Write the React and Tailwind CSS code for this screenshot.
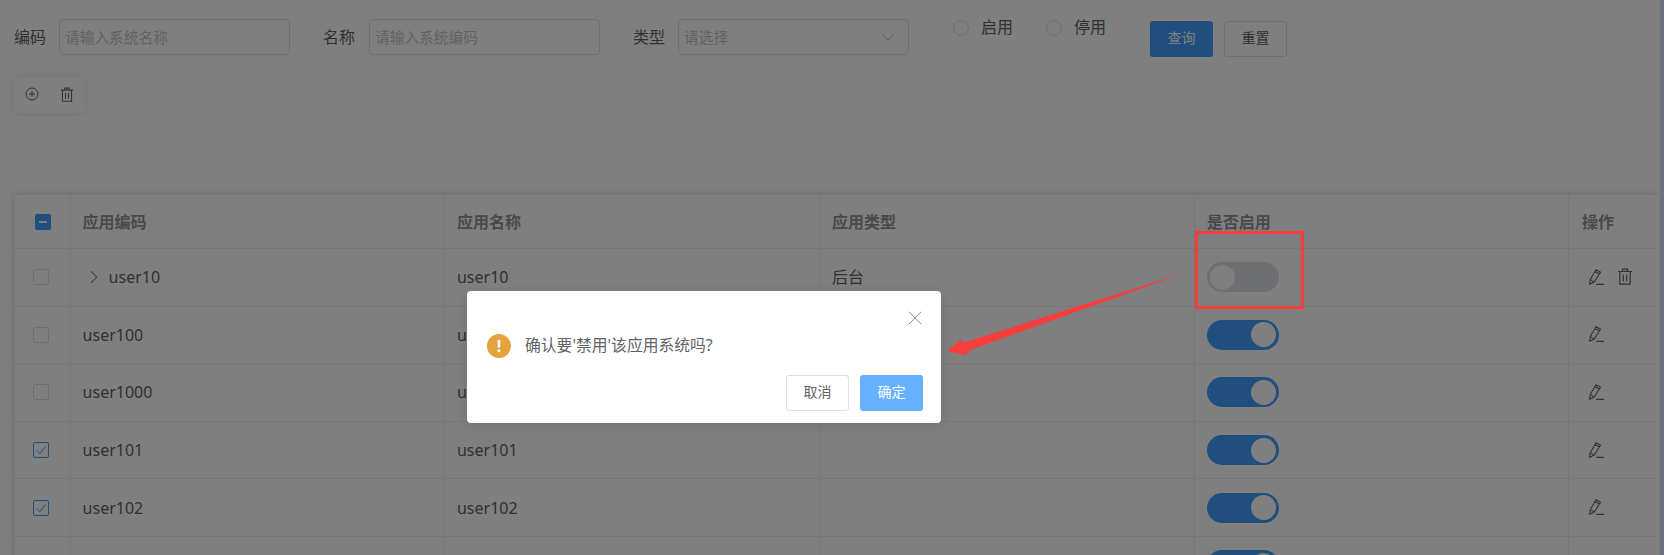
import { ChevronDown, ChevronRight, X } from "lucide-react";

const font = "font-['Noto_Sans','Noto_Sans_CJK_SC',sans-serif]";

const rows = [
  { code: "user10", name: "user10", type: "后台", enabled: false, checked: false, expand: true, del: true },
  { code: "user100", name: "user100", type: "", enabled: true, checked: false },
  { code: "user1000", name: "user1000", type: "", enabled: true, checked: false },
  { code: "user101", name: "user101", type: "", enabled: true, checked: true },
  { code: "user102", name: "user102", type: "", enabled: true, checked: true },
  { code: "", name: "", type: "", enabled: true, checked: false, last: true },
];

function TrashIcon({ className }) {
  return (
    <svg viewBox="0 0 16 17" fill="none" stroke="currentColor" strokeWidth="1.2" className={className}>
      <path d="M1 3.5h14M5.5 3.5V1.2h5v2.3M2.8 3.5v12.6h10.4V3.5M6.3 6.5v6.8M9.7 6.5v6.8" />
    </svg>
  );
}

function PencilIcon() {
  return (
    <svg viewBox="0 0 15 16" fill="none" stroke="currentColor" strokeWidth="1.1" className="h-4 w-[15px]">
      <path d="M0.7 15.2L1.2 10.6L7 0.8L11.5 3.3L5.2 13.1ZM5.9 2.6L10.4 5.1M1.2 10.6L5.2 13.1M7.2 15.4H14.8" />
    </svg>
  );
}

function Radio({ label }) {
  return (
    <div className="flex h-4 items-center gap-3">
      <span className="h-4 w-4 rounded-full border border-[#dcdfe6] bg-white" />
      <span className="mb-[2px] text-base leading-4 text-[#606266]">{label}</span>
    </div>
  );
}

function Field({ label, placeholder, select, labelWidth }) {
  return (
    <div className="flex items-center">
      <span className={`${labelWidth} text-base text-[#606266]`}>{label}</span>
      <div className="flex h-9 w-[231px] items-center justify-between rounded border border-[#dcdfe6] px-[5px] text-[14.7px] text-[#c0c4cc]">
        <span>{placeholder}</span>
        {select && <ChevronDown className="mr-[3px] h-6 w-6" strokeWidth={1} />}
      </div>
    </div>
  );
}

function Switch({ on }) {
  return (
    <div className={`flex h-[30px] w-[72px] items-center rounded-full px-[3px] ${on ? "justify-end bg-[#409eff]" : "justify-start bg-[#dcdfe6]"}`}>
      <span className="h-[25px] w-[25px] rounded-full bg-white" />
    </div>
  );
}

function Checkbox({ checked }) {
  return (
    <div className={`flex h-4 w-4 items-center justify-center rounded-[2px] border bg-white ${checked ? "border-[#409eff]" : "border-[#dcdfe6]"}`}>
      {checked && (
        <svg viewBox="0 0 14 14" fill="none" stroke="#409eff" strokeWidth="1" className="h-[14px] w-[14px]">
          <path d="M2.5 7.2L5.8 10.6L11.5 3.5" />
        </svg>
      )}
    </div>
  );
}

const cols = "grid grid-cols-[55.6px_374.4px_375px_374.7px_374.4px_90px]";
const cell = "flex items-center border-r border-[#ebeef5] px-3";

function Row({ row }) {
  return (
    <div className={`${cols} h-[57.6px] border-b border-[#ebeef5] text-base text-[#606266]`}>
      <div className={`${cell} pl-[18px]`}>{!row.last && <Checkbox checked={row.checked} />}</div>
      <div className={cell}>
        {row.expand && <ChevronRight className="mr-1 h-[22px] w-[22px]" strokeWidth={1.1} />}
        {row.code}
      </div>
      <div className={cell}>{row.name}</div>
      <div className={cell}>{row.type}</div>
      <div className={cell}>
        <Switch on={row.enabled} />
      </div>
      <div className={`${cell} gap-[13px] border-r-0 pb-px pl-5 text-[#666666]`}>
        {!row.last && <PencilIcon />}
        {row.del && <TrashIcon className="h-[17px] w-4" />}
      </div>
    </div>
  );
}

export default function App() {
  return (
    <div className={`relative h-[555px] w-[1664px] overflow-hidden bg-white ${font}`}>
      <div className="flex h-full">
        <div className="w-[1660px] pl-[14px] pr-px">
          {/* Search bar */}
          <div className="flex items-start pt-[19px]">
            <Field label="编码" placeholder="请输入系统名称" labelWidth="w-[45px]" />
            <div className="ml-[33px]">
              <Field label="名称" placeholder="请输入系统编码" labelWidth="w-[46px]" />
            </div>
            <div className="ml-[33px]">
              <Field label="类型" placeholder="请选择" labelWidth="w-[45px]" select />
            </div>
            <div className="ml-[44px] mt-px flex gap-[33px]">
              <Radio label="启用" />
              <Radio label="停用" />
            </div>
            <button className="ml-[44px] mt-[2px] h-9 w-[63px] rounded-[3px] bg-[#409eff] pb-[2px] text-sm text-white">查询</button>
            <button className="ml-[11px] mt-[2px] h-9 w-[63px] rounded-[3px] border border-[#dcdfe6] pb-[2px] text-sm text-[#606266]">重置</button>
          </div>

          {/* Toolbar */}
          <div className="mt-5 flex h-9 w-[71px] items-center gap-[21px] rounded-[2px] pb-[2px] pl-[11px] text-[#666666] shadow-[0_0_6px_rgba(0,0,0,0.12)]">
            <svg viewBox="0 0 14 14" fill="none" stroke="currentColor" strokeWidth="1" className="h-[14px] w-[14px]">
              <circle cx="7" cy="7" r="6" />
              <path d="M7 4.2v5.6M4.2 7h5.6" />
            </svg>
            <TrashIcon className="h-[15px] w-[14px]" />
          </div>

          {/* Table */}
          <div className="mt-[81px] border-l border-t border-[#ebeef5] shadow-[0_0_6px_rgba(0,0,0,0.15)]">
            <div className={`${cols} h-[54px] border-b border-[#ebeef5] text-base font-bold text-[#909399]`}>
              <div className={`${cell} pl-[20px]`}>
                <div className="flex h-4 w-4 items-center justify-center rounded-[2px] bg-[#409eff]">
                  <span className="h-[2px] w-2 bg-white" />
                </div>
              </div>
              <div className={cell}>应用编码</div>
              <div className={cell}>应用名称</div>
              <div className={cell}>应用类型</div>
              <div className={cell}>是否启用</div>
              <div className={`${cell} border-r-0 pl-[13px]`}>操作</div>
            </div>
            {rows.map((row, i) => (
              <Row key={i} row={row} />
            ))}
          </div>
        </div>
        <div className="w-1 bg-[#d8e0ff]" />
      </div>

      {/* Mask */}
      <div className="absolute inset-0 bg-black/50" />

      {/* Annotation */}
      <div className="absolute left-[1195px] top-[231px] h-[78px] w-[109px] border-[3px] border-[#f93d3d]" />
      <svg className="absolute left-[940px] top-[265px] h-[95px] w-[255px]" viewBox="940 265 255 95">
        <polygon fill="#f93d3d" points="1186.7,272 963.3,342.7 960.7,339.3 947.3,351.3 965.3,355.3 970,350" />
      </svg>

      {/* Confirm dialog */}
      <div className="absolute left-[467px] top-[291px] h-[132px] w-[474px] rounded bg-white text-[#606266] shadow-[0_2px_12px_rgba(0,0,0,0.1)]">
        <div className="flex justify-end pr-[14px] pt-[15px]">
          <X className="h-6 w-6 text-[#909399]" strokeWidth={1} />
        </div>
        <div className="mt-1 flex items-center pl-5">
          <div className="flex h-6 w-6 items-center justify-center rounded-full bg-[#e6a23c] text-base font-bold leading-none text-white">!</div>
          <span className="ml-[14px] text-[15.8px]">确认要'禁用'该应用系统吗?</span>
        </div>
        <div className="mt-[17px] flex justify-end gap-[11px] pr-[18px]">
          <button className="h-9 w-[63px] rounded-[3px] border border-[#dcdfe6] pb-[2px] text-sm">取消</button>
          <button className="h-9 w-[63px] rounded-[3px] bg-[#66b1ff] pb-[2px] text-sm text-white">确定</button>
        </div>
      </div>
    </div>
  );
}
